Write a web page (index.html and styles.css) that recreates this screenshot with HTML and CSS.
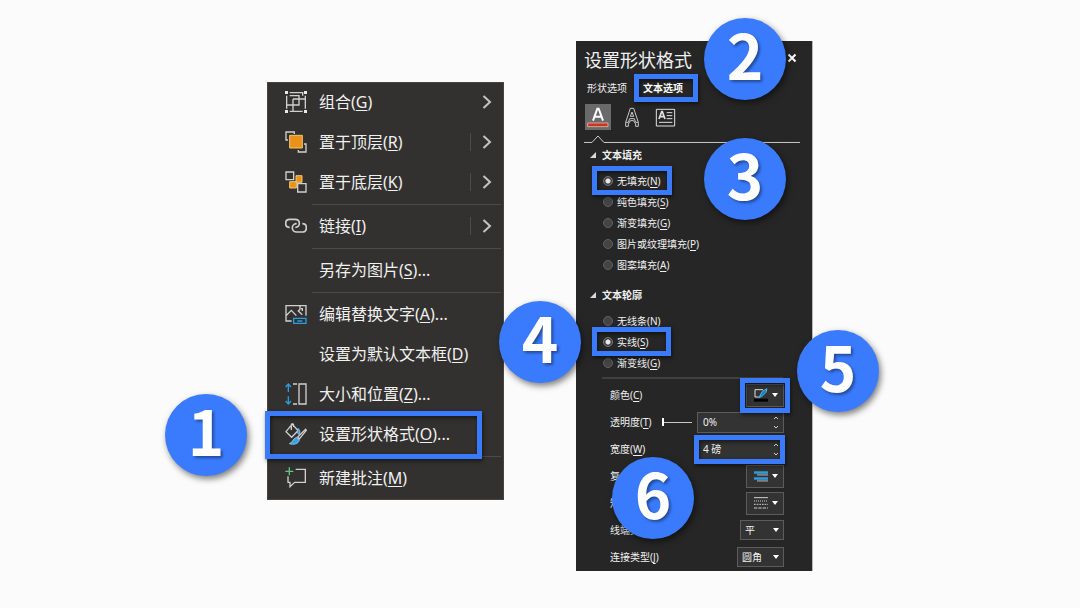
FILE: index.html
```html
<!DOCTYPE html>
<html lang="zh-CN">
<head>
<meta charset="utf-8">
<title>设置形状格式</title>
<link rel="stylesheet" href="styles.css">
</head>
<body>
<main class="stage">
  <nav class="menu" aria-label="右键菜单">
    <button class="item" type="button">
      <svg class="icon" viewBox="0 0 66 66"><path class="line" d="M14 5H53V14M5 14V53M14 61H53M61 14V53M14 14H42V42H5M24 24V61M24 24H61"/><path class="solid" d="M0 0H9V9H0ZM57 0H66V9H57ZM0 57H9V66H0ZM57 57H66V66H57Z"/></svg>
      <span>组合(<u>G</u>)</span><span class="more"><svg viewBox="0 0 10 14"><path d="M1.500 1 8 7 1.500 13"/></svg></span>
    </button>
    <button class="item" type="button">
      <svg class="icon" viewBox="0 0 66 66"><path class="line" d="M28 9V3H3V27H9M40 57V63H63V39H57"/><path class="orange" d="M14 13H52V51H14Z"/></svg>
      <span>置于顶层(<u>R</u>)</span><span class="more split"><svg viewBox="0 0 10 14"><path d="M1.500 1 8 7 1.500 13"/></svg></span>
    </button>
    <button class="item" type="button">
      <svg class="icon" viewBox="0 0 66 66"><path class="orange" d="M33 14H51V34H33ZM14 32H34V51H14Z"/><path class="line back" d="M3 3H26V26H3ZM38 38H63V63H38Z"/></svg>
      <span>置于底层(<u>K</u>)</span><span class="more split"><svg viewBox="0 0 10 14"><path d="M1.500 1 8 7 1.500 13"/></svg></span>
    </button>
    <hr class="rule">
    <button class="item" type="button">
      <svg class="icon" viewBox="0 0 66 66"><path class="line thick" d="M14 37C6 37 2 31 2 25C2 18 7 13 14 13H30C38 13 43 18 43 25C43 32 38 37 31 37M35 26C28 26 22 31 22 38C22 46 28 51 35 51H52C59 51 64 46 64 38C64 31 59 26 52 26"/></svg>
      <span>链接(<u>I</u>)</span><span class="more split"><svg viewBox="0 0 10 14"><path d="M1.500 1 8 7 1.500 13"/></svg></span>
    </button>
    <hr class="rule">
    <button class="item" type="button"><span class="icon"></span><span>另存为图片(<u>S</u>)...</span></button>
    <hr class="rule">
    <button class="item" type="button">
      <svg class="icon" viewBox="0 0 66 66"><path class="line" d="M20 54H3V8H63V38M3 38 19 22 34 38M45 9V19L40 24 52 35M48 17H52V24"/><path class="blue" d="M26 46H63V61H26ZM37 54H52"/></svg>
      <span>编辑替换文字(<u>A</u>)...</span>
    </button>
    <button class="item" type="button"><span class="icon"></span><span>设置为默认文本框(<u>D</u>)</span></button>
    <button class="item" type="button">
      <svg class="icon" viewBox="0 0 66 66"><path class="blue" d="M10 27V5M2 12 10 3 18 12M10 40V61M2 54 10 63 18 54"/><path class="line" d="M24 3H36M24 63H36M42 3H63V63H42Z"/></svg>
      <span>大小和位置(<u>Z</u>)...</span>
    </button>
    <button class="item mark mark-item" type="button">
      <svg class="icon" viewBox="0 0 66 66"><path class="line" d="M16 10 3 26 20 43 39 23 22 4ZM19 21V6C19 1 26 1 26 7V12"/><path class="paint" d="M39 16C46 22 46 29 42 35L36 28Z"/><path class="line" d="M62 19 38 42 43 48 64 22Z"/><path class="paint" d="M35 43 43 52C40 62 27 67 13 62C24 59 22 47 35 43Z"/></svg>
      <span>设置形状格式(<u>O</u>)...</span>
    </button>
    <hr class="rule">
    <button class="item" type="button">
      <svg class="icon" viewBox="0 0 66 66"><path class="line" d="M32 7H61V46H29L15 59V46H9V28"/><path class="green" d="M13 1V25M1 13H25"/></svg>
      <span>新建批注(<u>M</u>)</span>
    </button>
  </nav>

  <section class="panel">
    <header class="head">
      <h1 class="title">设置形状格式</h1>
      <button class="close" type="button" aria-label="关闭"><svg viewBox="0 0 10 10"><path d="M1.500 1.500 8.500 8.500M8.500 1.500 1.500 8.500"/></svg></button>
    </header>
    <div class="tabs">
      <button class="tab" type="button">形状选项</button>
      <button class="tab active mark mark-tab" type="button">文本选项</button>
    </div>
    <div class="tools">
      <button class="tool on" type="button" aria-label="文本填充与轮廓"><svg viewBox="0 0 78 78"><path class="letter" d="M24 50 37 14H41L54 50M29 38H49"/><path class="red" d="M8 57H69V68H8Z"/></svg></button>
      <button class="tool" type="button" aria-label="文字效果"><svg viewBox="0 0 78 78"><path class="thin" d="M20 55 34 13H44L58 55H50L46 44H32L28 55ZM34 37H44L39 24Z"/><path class="thin" d="M20 56V67H28V60L34 50H44L50 60V67H58V56"/></svg></button>
      <button class="tool" type="button" aria-label="文本框"><svg viewBox="0 0 78 78"><path class="frame" d="M10 16H65V66H10Z"/><path class="frame bold" d="M18 45 26 23H28L36 45M21 38H33"/><path class="frame" d="M41 26H58M41 35H58M41 44H58M18 55H58"/></svg></button>
    </div>
    <svg class="pointer" viewBox="0 0 217 10"><path d="M0 8.500H8L14 2 20 8.500H217"/></svg>

    <h2 class="group"><svg viewBox="0 0 6 6"><path d="M6 0V6H0Z"/></svg>文本填充</h2>
    <div class="radios">
      <label class="radio mark mark-fill"><input type="radio" name="fill" checked>无填充(<u>N</u>)</label>
      <label class="radio"><input type="radio" name="fill">纯色填充(<u>S</u>)</label>
      <label class="radio"><input type="radio" name="fill">渐变填充(<u>G</u>)</label>
      <label class="radio"><input type="radio" name="fill">图片或纹理填充(<u>P</u>)</label>
      <label class="radio"><input type="radio" name="fill">图案填充(<u>A</u>)</label>
    </div>

    <h2 class="group second"><svg viewBox="0 0 6 6"><path d="M6 0V6H0Z"/></svg>文本轮廓</h2>
    <div class="radios">
      <label class="radio"><input type="radio" name="outline">无线条(<u>N</u>)</label>
      <label class="radio mark mark-fill"><input type="radio" name="outline" checked>实线(<u>S</u>)</label>
      <label class="radio"><input type="radio" name="outline">渐变线(<u>G</u>)</label>
    </div>
    <hr class="divider">

    <div class="fields">
      <div class="field">
        <label for="color">颜色(<u>C</u>)</label>
        <span class="mark mark-color"><button class="drop" id="color" type="button"><svg class="glyph" viewBox="0 0 42 42"><path class="page" d="M27 5H3V27H14"/><path class="pen" d="M39 2 25 10 15 28 23 26 36 13ZM12 31 20 22"/><path class="ink" d="M0 32H42V41H0Z"/></svg><svg class="caret" viewBox="0 0 6 4"><path d="M0 0H6L3 4Z"/></svg></button></span>
      </div>
      <div class="field">
        <label for="alpha">透明度(<u>T</u>)</label>
        <input class="slider" type="range" min="0" max="100" value="0" aria-label="透明度滑块">
        <span class="spin"><input id="alpha" type="text" value="0%"><svg class="steps" viewBox="0 0 6 18"><path d="M1 6 3 4 5 6M1 13 3 15 5 13"/></svg></span>
      </div>
      <div class="field">
        <label for="width">宽度(<u>W</u>)</label>
        <span class="spin mark mark-width"><input id="width" type="text" value="4 磅"><svg class="steps" viewBox="0 0 6 18"><path d="M1 6 3 4 5 6M1 13 3 15 5 13"/></svg></span>
      </div>
      <div class="field">
        <label for="compound">复合类型(<u>C</u>)</label>
        <button class="drop" id="compound" type="button"><svg class="glyph" viewBox="0 0 42 42"><path class="shade" d="M9 14H42V20H9ZM9 32H42V38H9Z"/><path class="bars" d="M0 7H42V14H0ZM0 25H42V32H0Z"/></svg><svg class="caret" viewBox="0 0 6 4"><path d="M0 0H6L3 4Z"/></svg></button>
      </div>
      <div class="field">
        <label for="dash">短划线类型(<u>D</u>)</label>
        <button class="drop" id="dash" type="button"><svg class="glyph" viewBox="0 0 42 42"><path class="dashes" d="M0 5H42"/><path class="dashes dots" d="M0 15H42"/><path class="dashes short" d="M0 25H42"/><path class="dashes long" d="M0 36H42"/></svg><svg class="caret" viewBox="0 0 6 4"><path d="M0 0H6L3 4Z"/></svg></button>
      </div>
      <div class="field">
        <label for="cap">线端类型(<u>A</u>)</label>
        <span class="pick"><select id="cap"><option>平</option></select><svg class="caret" viewBox="0 0 6 4"><path d="M0 0H6L3 4Z"/></svg></span>
      </div>
      <div class="field">
        <label for="join">连接类型(<u>J</u>)</label>
        <span class="pick wide"><select id="join"><option>圆角</option></select><svg class="caret" viewBox="0 0 6 4"><path d="M0 0H6L3 4Z"/></svg></span>
      </div>
    </div>
  </section>

  <span class="badge b1">1</span>
  <span class="badge b2">2</span>
  <span class="badge b3">3</span>
  <span class="badge b4">4</span>
  <span class="badge b5">5</span>
  <span class="badge b6">6</span>
</main>
</body>
</html>
```
FILE: styles.css
```css
* { box-sizing: border-box; }

body {
  margin: 0;
  background: #fbfbfb;
  color: #f0f0f0;
  font-family: "Noto Sans", "Noto Sans CJK SC", sans-serif;
}

button, input, select {
  margin: 0;
  padding: 0;
  border: 0;
  background: none;
  color: inherit;
  font: inherit;
}

svg { display: block; fill: none; }
u { text-underline-offset: 2px; }

.stage {
  position: relative;
  display: flex;
  align-items: flex-start;
  gap: 72px;
  width: max-content;
  margin: 0 auto;
  padding: 41px 0 37px;
}

/* Context menu */
.menu {
  width: 237px;
  margin-top: 41px;
  padding-bottom: 2px;
  background: #32312f;
  box-shadow: inset 0 0 0 1px #454442;
}

.item {
  display: flex;
  align-items: center;
  gap: 12px;
  width: 100%;
  height: 40px;
  padding: 0 12px 0 18px;
  font-size: 16px;
  line-height: 24px;
  text-align: left;
  white-space: nowrap;
}

.icon { flex: none; width: 22px; height: 22px; }

.rule {
  height: 1px;
  margin: 2px 3px 1px 45px;
  border: 0;
  background: #4c4b49;
}

.line { stroke: #cfcfcf; stroke-width: 4; }
.thick { stroke-width: 5; }
.solid { fill: #e8e8e8; }
.orange { fill: #e8921c; stroke: #f6c56c; stroke-width: 3; }
.back { fill: #32312f; }
.blue { stroke: #2d9be0; stroke-width: 4; }
.paint { fill: #3ba0e6; stroke: #b5dcf5; stroke-width: 2; }
.green { stroke: #5fc878; stroke-width: 4; }

.more {
  display: flex;
  align-items: center;
  height: 18px;
  margin-left: auto;
  padding-left: 11px;
}
.more svg { width: 10px; height: 14px; stroke: #c4c4c4; stroke-width: 2; }
.split { border-left: 1px solid #4c4b49; }

/* Format pane */
.panel {
  width: 237px;
  padding: 0 12px 0 8px;
  background: #262626;
  border-right: 1px solid #b8b8b8;
  font-size: 10px;
  line-height: 18px;
}

.head {
  display: flex;
  align-items: center;
  justify-content: space-between;
  height: 38px;
}
.title { margin: 0; font-size: 18px; font-weight: 400; line-height: 24px; }
.close svg { width: 10px; height: 10px; stroke: #fff; stroke-width: 2; }
.close { margin: 0 3px 5px 0; }

.tabs { display: flex; gap: 16px; padding-left: 3px; }
.tab { line-height: 18px; }
.active { color: #fff; font-weight: 700; }

.tools { display: flex; gap: 8px; margin-top: 7px; padding-left: 1px; }
.tool { width: 26px; height: 26px; }
.on { background: #6a6a6a; }
.letter { stroke: #fff; stroke-width: 6; }
.red { fill: #c8371a; stroke: #f0d0c8; stroke-width: 2; }
.thin { stroke: #c8c8c8; stroke-width: 3; }
.frame { stroke: #e0e0e0; stroke-width: 3; }
.bold { stroke-width: 5; }

.pointer { width: 100%; margin: 4px 0 2px; stroke: #cccccc; }

.group {
  display: flex;
  align-items: center;
  gap: 6px;
  margin: 0;
  padding-left: 6px;
  font-size: 10px;
  font-weight: 700;
  line-height: 18px;
}
.group svg { width: 6px; height: 6px; fill: #d8d8d8; }
.second { margin-top: 10px; }

.radios {
  display: flex;
  flex-direction: column;
  align-items: flex-start;
  margin-top: 7px;
  padding-left: 19px;
}
.radio { display: flex; align-items: center; height: 21px; }
.radio input {
  appearance: none;
  width: 10px;
  height: 10px;
  margin-right: 4px;
  border: 1px solid #606060;
  border-radius: 50%;
  background: #444;
}
.radio input:checked {
  border-color: #777;
  background: radial-gradient(circle, #e8e8e8 0 2px, #444 3px);
}

.divider { height: 2px; margin: 3px 17px 3px 18px; border: 0; background: #404040; }

.fields { display: grid; grid-auto-rows: 27px; padding: 0 16px 0 26px; }
.field { display: flex; align-items: center; justify-content: space-between; white-space: nowrap; }

.drop {
  display: flex;
  align-items: center;
  justify-content: space-between;
  width: 38px;
  height: 23px;
  padding: 0 5px 0 7px;
  border: 1px solid #5c5c5c;
  background: #333;
}
.glyph { width: 14px; height: 14px; }
.caret { width: 6px; height: 4px; fill: #fff; }
.page { stroke: #ddd; stroke-width: 3; }
.pen { fill: #1f7db8; stroke: #4fb3e8; stroke-width: 3; }
.ink { fill: #000; }
.bars { fill: #2d9be0; }
.shade { fill: #808080; }
.dashes { stroke: #d0d0d0; stroke-width: 3; }
.dots { stroke-dasharray: 3 3; }
.short { stroke-dasharray: 5 3; }
.long { stroke-dasharray: 10 3; }

.slider { appearance: none; width: 30px; height: 10px; margin: 0 0 0 auto; }
.slider::-webkit-slider-runnable-track {
  height: 8px;
  background: linear-gradient(#c8c8c8, #c8c8c8) center / 100% 1px no-repeat;
}
.slider::-webkit-slider-thumb { appearance: none; width: 2px; height: 8px; background: #fff; }

.spin {
  display: flex;
  align-items: center;
  width: 87px;
  height: 21px;
  margin-left: 5px;
  padding: 0 4px 0 5px;
  border: 1px solid #5c5c5c;
  background: #333;
}
.spin input { flex: 1; min-width: 0; }
.steps { width: 6px; height: 18px; stroke: #d0d0d0; }

.pick { position: relative; width: 44px; height: 20px; }
.pick select {
  appearance: none;
  width: 100%;
  height: 100%;
  padding-left: 4px;
  border: 1px solid #5c5c5c;
  background: #333;
}
.pick .caret { position: absolute; top: 8px; right: 5px; pointer-events: none; }
.wide { width: 47px; }

/* Highlight frames */
.mark { position: relative; }
.mark::after {
  content: "";
  position: absolute;
  border: 5px solid #3a7bfd;
  box-shadow: 1px 2px 4px rgba(0, 0, 0, .55), inset 1px 2px 4px rgba(0, 0, 0, .55);
  pointer-events: none;
}
.mark-item::after { inset: -3px 22px -5px -2px; }
.mark-tab::after { inset: -5px -15px -5px -9px; }
.mark-fill::after { inset: -5px -11px -3px -11px; }
.radio + .mark-fill::after { right: -22px; }
.mark-color::after { inset: -6px; }
.mark-width::after { inset: -5px -2px -5px -4px; }

/* Numbered steps */
.badge {
  position: absolute;
  width: 82px;
  height: 82px;
  border-radius: 50%;
  background: #3a7bfd;
  box-shadow: 2px 3px 6px rgba(0, 0, 0, .5);
  color: #fff;
  font: 700 62px/70px "Noto Sans CJK SC", sans-serif;
  text-align: center;
  text-shadow: 2px 2px 3px rgba(0, 0, 0, .4);
}
.b1 { left: -102px; top: 394px; }
.b2 { left: 437px; top: 18px; }
.b3 { left: 437px; top: 138px; }
.b4 { left: 232px; top: 301px; }
.b5 { left: 530px; top: 330px; }
.b6 { left: 345px; top: 457px; }
```
